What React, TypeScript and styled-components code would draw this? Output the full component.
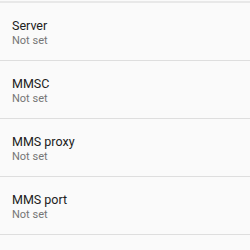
import React from 'react';
import styled, { createGlobalStyle } from 'styled-components';

const GlobalStyle = createGlobalStyle`
  html, body {
    margin: 0;
    padding: 0;
    background: #fafafa;
  }
  body {
    font-family: Roboto, "Noto Sans", sans-serif;
  }
`;

interface Setting {
  title: string;
  summary: string;
}

const settings: Setting[] = [
  { title: 'Server', summary: 'Not set' },
  { title: 'MMSC', summary: 'Not set' },
  { title: 'MMS proxy', summary: 'Not set' },
  { title: 'MMS port', summary: 'Not set' },
];

const List = styled.div`
  width: 250px;
  height: 249px;
  overflow: hidden;
  margin-top: 1px;
  background: #fafafa;
  box-sizing: border-box;
  border-top: 2px solid #e8e8e8;
`;

const Row = styled.div`
  height: 58px;
  box-sizing: border-box;
  padding: 15px 12px 0;
  border-bottom: 1px solid #dedede;
  display: flex;
  flex-direction: column;
`;

const Title = styled.div`
  font-size: 12.5px;
  line-height: 15px;
  color: #212121;
`;

const Summary = styled.div`
  font-size: 11px;
  line-height: 14px;
  margin-top: 0.5px;
  color: #757575;
`;

export default function App() {
  return (
    <>
      <GlobalStyle />
      <List>
        {settings.map(s => (
          <Row key={s.title}>
            <Title>{s.title}</Title>
            <Summary>{s.summary}</Summary>
          </Row>
        ))}
      </List>
    </>
  );
}
